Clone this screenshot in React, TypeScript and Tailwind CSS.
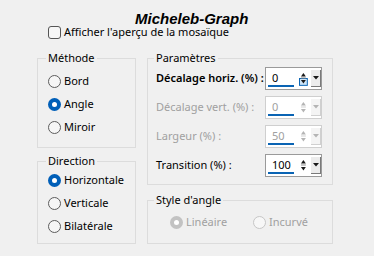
import React from "react";

const font = { fontFamily: '"Noto Sans", "Open Sans", sans-serif' };

function Radio({ checked, disabled }: { checked?: boolean; disabled?: boolean }) {
  if (checked) {
    return (
      <span
        className={`flex h-[13px] w-[13px] shrink-0 items-center justify-center rounded-full ${
          disabled ? "bg-[#c2c2c2]" : "bg-[#005fb8]"
        }`}
      >
        <span className="h-[5px] w-[5px] rounded-full bg-white" />
      </span>
    );
  }
  return (
    <span
      className={`h-[13px] w-[13px] shrink-0 rounded-full border ${
        disabled ? "border-[#c6c6c6] bg-[#f7f7f7]" : "border-[#5c5c5c] bg-[#f6f6f6]"
      }`}
    />
  );
}

function RadioRow({ label, checked, disabled }: { label: string; checked?: boolean; disabled?: boolean }) {
  return (
    <div className="flex h-[23px] items-center gap-[3px]">
      <Radio checked={checked} disabled={disabled} />
      <span className={disabled ? "text-[#a0a0a0]" : "text-black"}>{label}</span>
    </div>
  );
}

function Spin({ value, disabled, hot }: { value: string; disabled?: boolean; hot?: boolean }) {
  const arrow = disabled ? "#b4b4b4" : "#1a1a1a";
  return (
    <div
      className={`relative flex h-[23px] w-[57px] shrink-0 items-center border bg-white ${
        disabled ? "border-[#cfcfcf]" : "border-[#9a9a9a]"
      }`}
    >
      <span className={`ml-[6px] w-[26px] ${disabled ? "text-[#a0a0a0]" : "text-black"}`}>{value}</span>
      <div className="absolute bottom-[2px] left-[2px] h-[2px] w-[26px] bg-[#0a64b4]" />
      <svg width="10" height="17" viewBox="0 0 10 17" className="ml-[2px]">
        {hot && <rect x="0.5" y="8.5" width="8" height="7" fill="#cce4f7" stroke="#0a64b4" />}
        <path d="M2 6.5 L4.5 3 L7 6.5 Z" fill={arrow} />
        <line x1="2" y1="8" x2="7" y2="8" stroke={disabled ? "#d0d0d0" : "#8a8a8a"} />
        <path d="M2 10 L4.5 13.5 L7 10 Z" fill={arrow} />
      </svg>
      <div
        className={`ml-[2px] flex h-[17px] w-[10px] items-center justify-center border-r border-b ${
          disabled ? "border-[#d0d0d0] bg-[#f4f4f4]" : "border-[#7a7a7a] bg-[#ececec]"
        }`}
      >
        <svg width="6" height="4" viewBox="0 0 6 4">
          <path d="M0 0 L6 0 L3 3.5 Z" fill={arrow} />
        </svg>
      </div>
    </div>
  );
}

function Field({ label, value, disabled, bold, hot }: { label: string; value: string; disabled?: boolean; bold?: boolean; hot?: boolean }) {
  return (
    <div className="flex h-[23px] items-center justify-between">
      <span className={`whitespace-nowrap ${disabled ? "text-[#a0a0a0]" : "text-black"} ${bold ? "font-semibold" : ""}`}>{label}</span>
      <Spin value={value} disabled={disabled} hot={hot} />
    </div>
  );
}

function Group({ title, className, children }: { title: string; className: string; children: React.ReactNode }) {
  return (
    <fieldset className={`border border-[#dcdcdc] px-[10px] ${className}`}>
      <legend className="-ml-[2px] px-[2px] leading-[16px] text-black">{title}</legend>
      {children}
    </fieldset>
  );
}

export default function App() {
  return (
    <div className="h-[256px] w-[374px] overflow-hidden bg-[#f0f0f0] text-[11px]" style={font}>
      <div className="pl-[135px] pt-[11px] text-[15px] font-bold italic leading-[15px] text-black" style={{ fontFamily: '"Liberation Sans", Arial, sans-serif' }}>
        Micheleb-Graph
      </div>
      <div className="flex h-[13px] items-center gap-[3px] pl-[48px]">
        <span className="h-[13px] w-[13px] rounded-[3px] border border-[#555] bg-[#f6f6f6]" />
        <span>Afficher l'aperçu de la mosaïque</span>
      </div>
      <div className="mt-[11px] flex gap-[11px] pl-[37px]">
        <div className="flex w-[99px] flex-col gap-[5px]">
          <Group title="Méthode" className="h-[98px] pt-[4px]">
            <RadioRow label="Bord" />
            <RadioRow label="Angle" checked />
            <RadioRow label="Miroir" />
          </Group>
          <Group title="Direction" className="h-[91px]">
            <RadioRow label="Horizontale" checked />
            <RadioRow label="Verticale" />
            <RadioRow label="Bilatérale" />
          </Group>
        </div>
        <div className="flex w-[186px] flex-col gap-[7px]">
          <Group title="Paramètres" className="h-[135px] pr-[10px] pl-[8px]">
            <div className="flex flex-col gap-[6px] pt-[1px]">
              <Field label="Décalage horiz. (%) :" value="0" bold hot />
              <Field label="Décalage vert. (%) :" value="0" disabled />
              <Field label="Largeur (%) :" value="50" disabled />
              <Field label="Transition (%) :" value="100" />
            </div>
          </Group>
          <Group title="Style d'angle" className="h-[52px] pl-[8px]">
            <div className="flex pt-[3px] pl-[14px]">
              <div className="w-[83px]">
                <RadioRow label="Linéaire" checked disabled />
              </div>
              <RadioRow label="Incurvé" disabled />
            </div>
          </Group>
        </div>
      </div>
    </div>
  );
}
